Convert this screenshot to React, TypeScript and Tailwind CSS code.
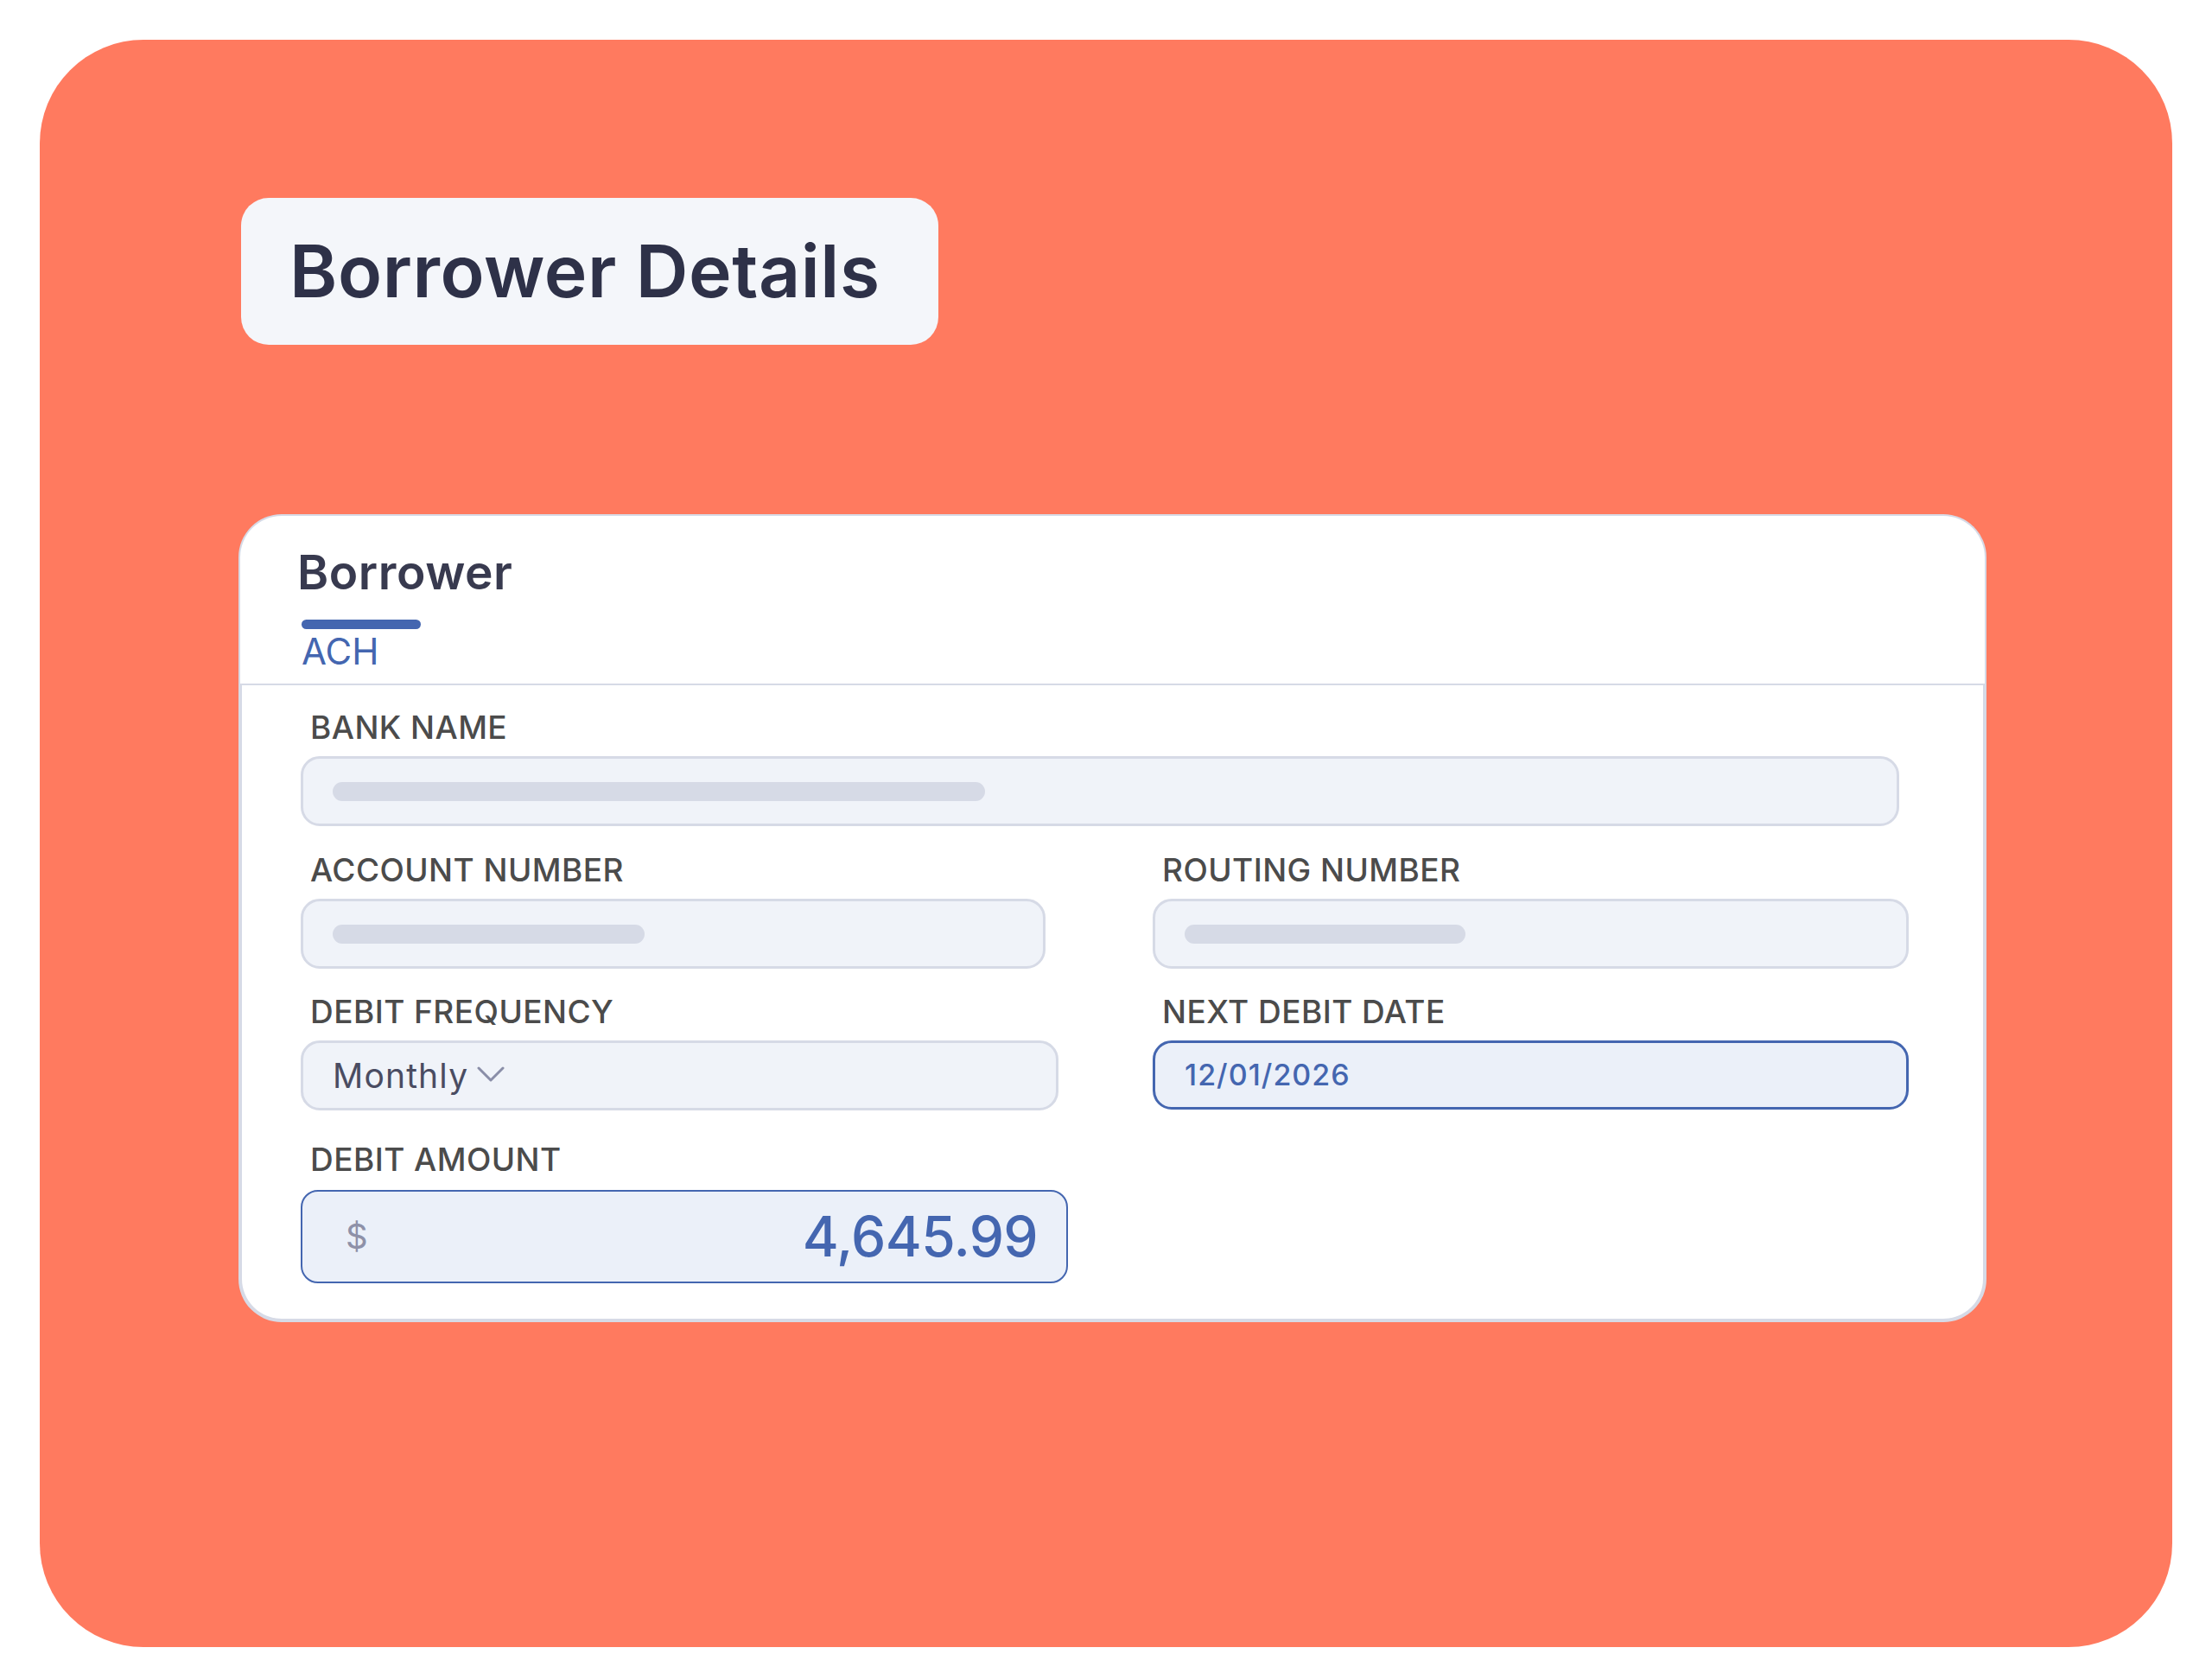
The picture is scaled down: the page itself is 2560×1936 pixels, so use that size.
const font = { fontFamily: "Inter, 'Noto Sans', sans-serif" }

type FieldProps = {
  label: string
  width: string
  children: React.ReactNode
  active?: boolean
}

const Label = ({ text }: { text: string }) => (
  <span className="pl-[11px] text-[37px] leading-none font-medium tracking-[0.012em] text-[#4b4b4b]">{text}</span>
)

const Field = ({ label, width, children, active }: FieldProps) => {
  return (
    <div className="flex flex-col">
      <Label text={label} />
      <div
        className={
          active
            ? `mt-[15px] h-[80px] ${width} flex items-center rounded-[22px] border-[3px] border-[#4466b0] bg-[#ebf0f9] px-[34px]`
            : `mt-[15px] h-[81px] ${width} flex items-center rounded-[22px] border-[3px] border-[#d6dae6] bg-[#f0f3f9] px-[34px]`
        }
      >
        {children}
      </div>
    </div>
  )
}

const Bar = ({ width }: { width: string }) => <div className={`h-[22px] ${width} rounded-full bg-[#d6dae6]`} />

const App = () => {
  return (
    <div className="w-[2560px] h-[1936px] bg-white pt-[46px] pl-[46px]" style={font}>
      <div className="w-[2468px] h-[1860px] rounded-[120px] bg-[#ff7a5f] pl-[230px] pt-[183px]">
        {/* page title chip */}
        <div className="ml-[3px] w-[807px] h-[170px] rounded-[32px] bg-[#f4f6fa] flex items-center pl-[56px]">
          <h1 className="text-[84px] leading-none font-semibold tracking-[0.007em] text-[#2e3148]">Borrower Details</h1>
        </div>

        {/* borrower card */}
        <div className="mt-[196px] w-[2023px]">
          <div className="rounded-t-[50px] border-x-2 border-t-2 border-[#d6dae6] bg-white pl-[66px] pt-[38px]">
            <h2 className="text-[55px] leading-none font-semibold tracking-[0.01em] text-[#383a4f]">Borrower</h2>
            <div className="mt-[27px] ml-[5px] w-[138px] h-[11px] rounded-full bg-[#4466b0]" />
            <div className="mt-[5px] ml-[5px] pb-[16px] text-[42px] leading-none text-[#4466b0]">ACH</div>
          </div>
          <div className="rounded-b-[50px] border-x-[4px] border-b-[4px] border-t-2 border-[#d6dae6] bg-white pl-[68px] pt-[30px] pb-[41px]">
            <Field label="BANK NAME" width="w-[1850px]">
              <Bar width="w-[755px]" />
            </Field>

            <div className="mt-[32px] grid grid-cols-[986px_1fr]">
              <Field label="ACCOUNT NUMBER" width="w-[862px]">
                <Bar width="w-[361px]" />
              </Field>
              <Field label="ROUTING NUMBER" width="w-[875px]">
                <Bar width="w-[325px]" />
              </Field>
            </div>

            <div className="mt-[31px] grid grid-cols-[986px_1fr]">
              <Field label="DEBIT FREQUENCY" width="w-[877px]">
                <span className="text-[39px] leading-none tracking-[0.03em] text-[#4a4c62]">Monthly</span>
                <svg className="ml-[10px] mt-[-4px]" width="32" height="18" viewBox="0 0 32 18" fill="none">
                  <polyline points="2,2 16,16 30,2" stroke="#8a8ea8" strokeWidth="3" strokeLinecap="round" strokeLinejoin="round" />
                </svg>
              </Field>
              <Field label="NEXT DEBIT DATE" width="w-[875px]" active>
                <span className="text-[34px] leading-none font-medium tracking-[0.03em] text-[#4466b0]">12/01/2026</span>
              </Field>
            </div>

            <div className="mt-[38px] flex flex-col">
              <Label text="DEBIT AMOUNT" />
              <div className="mt-[17px] h-[108px] w-[888px] flex items-center justify-between rounded-[20px] border-2 border-[#4466b0] bg-[#ebf0f9] pl-[50px] pr-[33px]">
                <span className="text-[40px] leading-none text-[#8e91a8]">$</span>
                <span className="text-[64px] leading-none font-medium tracking-[-0.01em] text-[#4466b0]">4,645.99</span>
              </div>
            </div>
          </div>
        </div>
      </div>
    </div>
  )
}

export default App
